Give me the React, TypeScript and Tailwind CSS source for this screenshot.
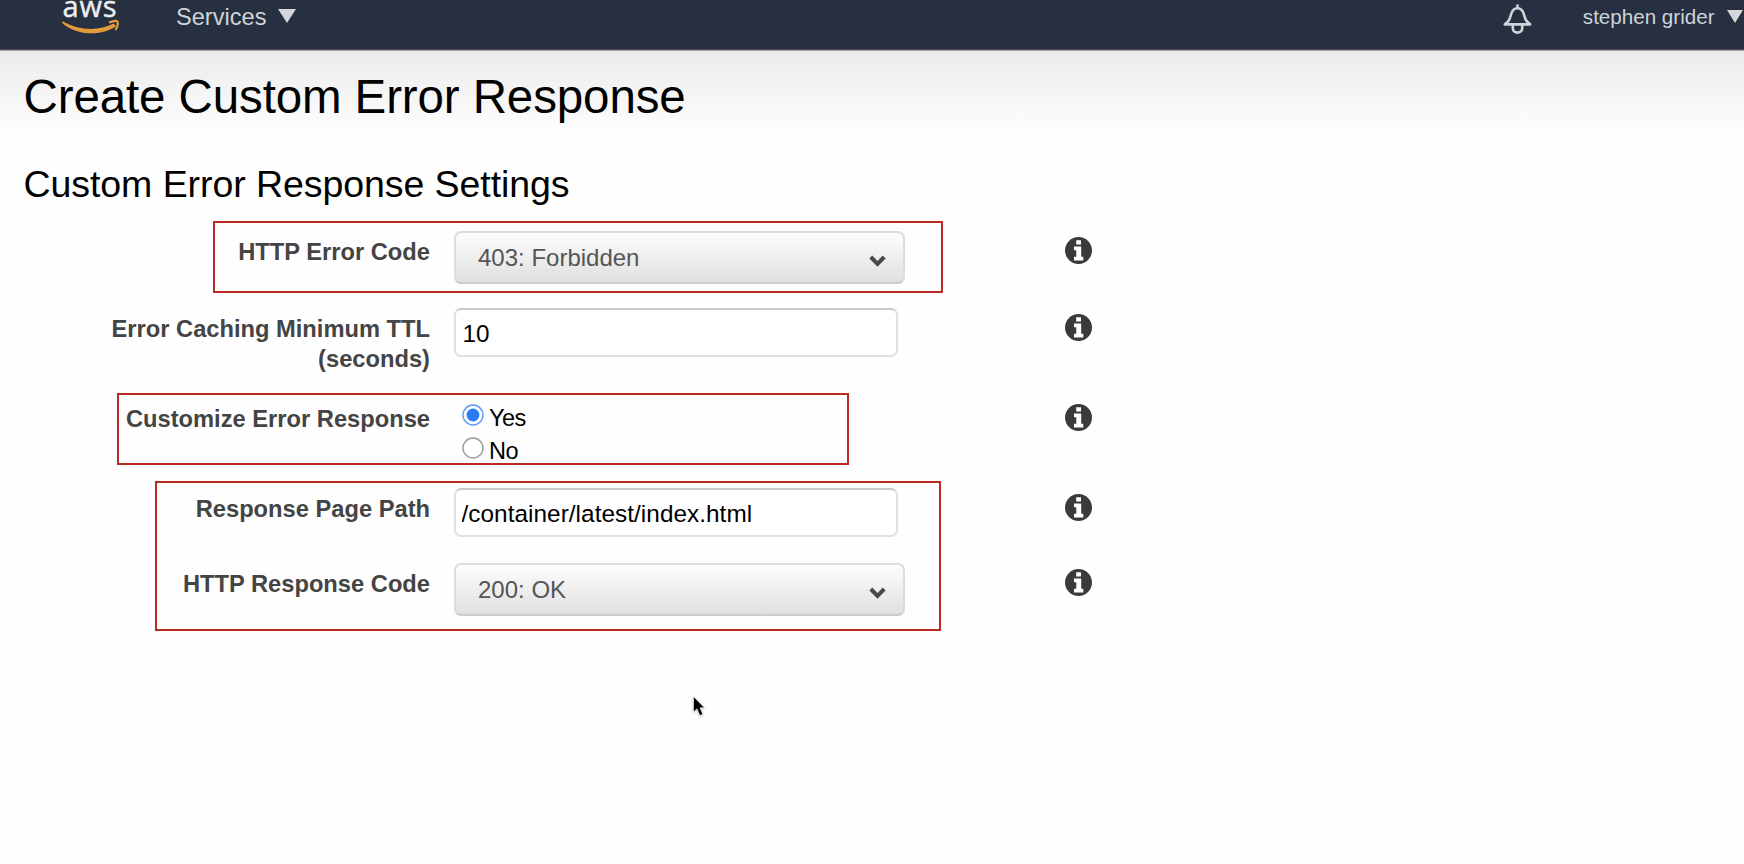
import type { ReactNode } from "react";

function InfoIcon() {
  return (
    <svg viewBox="0 0 27 27" className="mt-[6px] h-[27px] w-[27px]" aria-label="Info">
      <circle cx="13.5" cy="13.5" r="13.5" fill="#3a3a3a" />
      <path d="M11.2 3.2h4.8v4.4h-4.8zM9 9.6h7.2v10.2h2.1v3.600H9v-3.600h2.300v-6.600H9z" fill="#fff" />
    </svg>
  );
}

function Row({ label, height, children }: { label: ReactNode; height: string; children: ReactNode }) {
  return (
    <div className={`flex items-start ${height}`}>
      <div className="w-[430px] pt-[6px] text-right text-[23.7px] leading-[30px] font-bold text-[#444]">{label}</div>
      <div className="ml-6 w-[611px]">{children}</div>
      <InfoIcon />
    </div>
  );
}

function SelectBox({ value }: { value: string }) {
  return (
    <button className="flex h-[53px] w-[451px] items-center justify-between rounded-[7px] border-2 border-[#dcdcdc] border-b-[#cbcbcb] bg-linear-to-b from-[#fdfdfd] to-[#e0e0e0] pr-[17px] pl-[22px] text-[24px] text-[#555]">
      <span>{value}</span>
      <svg viewBox="0 0 17 12" className="mt-[6px] h-3 w-[17px]">
        <path d="M1.800 2L8.500 8.800L15.200 2" fill="none" stroke="#484848" strokeWidth="4" />
      </svg>
    </button>
  );
}

function TextBox({ value, inset }: { value: string; inset: string }) {
  return (
    <input
      readOnly
      value={value}
      className={`block h-[49px] w-[444px] rounded-[7px] border-2 border-[#e0e0e0] border-t-[#c8c8c8] bg-white pt-[2px] text-[24.3px] text-black outline-none ${inset}`}
    />
  );
}

function Radio({ label, checked }: { label: string; checked?: boolean }) {
  return (
    <div className="flex h-[33px] items-start">
      <svg viewBox="0 0 22 22" className="mr-[5.5px] ml-[7.5px] h-[22px] w-[22px]">
        <circle cx="11" cy="11" r="10" fill="#fff" stroke={checked ? "#5b97f5" : "#999"} strokeWidth="1.4" />
        {checked && <circle cx="11" cy="11" r="6.4" fill="#2a7bf6" />}
      </svg>
      <span className="text-[23.5px] leading-[28px] tracking-[-0.5px] text-black">{label}</span>
    </div>
  );
}

export default function App() {
  return (
    <div className="relative h-[864px] w-[1744px] overflow-hidden bg-[#fefefe] font-['Liberation_Sans',Arial,sans-serif]">
      <header className="flex h-[51px] items-start border-b border-[#a5a5aa] bg-[#263041] text-[#cfd3d8] shadow-[inset_0_-1px_0_#4a4a52]">
        <svg viewBox="0 0 60 36" className="ml-[61px] h-9 w-[60px]" aria-label="aws">
          <text x="1.5" y="17" fontSize="29" fontFamily="Open Sans, sans-serif" fontWeight="500" fill="#eceef0" stroke="#eceef0" strokeWidth="0.4" textLength="54">aws</text>
          <path d="M1.5 21.300C18 30.800 37 31.300 53 23.600L54.800 26.400C38 36.800 15 35.300 1.200 23Z" fill="#e39a3b" />
          <path d="M48 22.600C52 20.800 55.500 20.600 56.500 21.600C57.300 24 56 27.500 54.500 30" fill="none" stroke="#e39a3b" strokeWidth="2.200" />
        </svg>
        <div className="ml-[55px] flex items-start">
          <span className="text-[23.6px] leading-[34px]">Services</span>
          <svg viewBox="0 0 18 14" className="mt-[9px] ml-[12px] h-[14px] w-[18px]"><path d="M0 0H18L9 14Z" fill="#d4d7db" /></svg>
        </div>
        <div className="ml-auto flex items-start">
          <svg viewBox="0 0 30 30" className="mt-1 mr-[49.500px] h-[30px] w-[30px]" fill="none" stroke="#cfd3d8" strokeWidth="2.600" strokeLinejoin="round">
            <path d="M14.500 0.500V4M1.800 20.400H27.200C22.500 17 22.300 15 21 10.500C19.700 6 17.500 4.300 14.500 4.300S9.300 6 8 10.500C6.700 15 6.500 17 1.800 20.400ZM9.800 21V24.300C9.800 30 19.200 30 19.200 24.300V21" />
          </svg>
          <span className="text-[20.600px] leading-[34px]">stephen grider</span>
          <svg viewBox="0 0 16 13" className="mt-[10px] mr-[1.500px] ml-[12px] h-[13px] w-4"><path d="M0 0H16L8 13Z" fill="#d4d7db" /></svg>
        </div>
      </header>

      <main className="bg-[linear-gradient(#ebebeb,#fefefe_82px)] pt-4">
        <h1 className="pl-[23.500px] text-[47.5px] leading-[60px] tracking-[-0.110px] text-black">Create Custom Error Response</h1>
        <h2 className="mt-[35px] pl-[23.500px] text-[37.500px] leading-[44px] tracking-[-0.070px] text-black">Custom Error Response Settings</h2>
        <div className="mt-[25px]">
          <Row label="HTTP Error Code" height="h-[77px]">
            <SelectBox value="403: Forbidden" />
          </Row>
          <Row label={<>Error Caching Minimum TTL<br />(seconds)</>} height="h-[90px]">
            <TextBox value="10" inset="pl-[6.5px]" />
          </Row>
          <Row label="Customize Error Response" height="h-[90px]">
            <div className="pt-[6px]">
              <Radio label="Yes" checked />
              <Radio label="No" />
            </div>
          </Row>
          <Row label="Response Page Path" height="h-[75px]">
            <TextBox value="/container/latest/index.html" inset="pl-[5.5px] tracking-[0.06px]" />
          </Row>
          <Row label="HTTP Response Code" height="h-[77px]">
            <SelectBox value="200: OK" />
          </Row>
        </div>
      </main>

      <div className="pointer-events-none absolute top-[221px] left-[213px] h-[72px] w-[730px] border-2 border-[#b92b23]" />
      <div className="pointer-events-none absolute top-[393px] left-[117px] h-[72px] w-[732px] border-2 border-[#b92b23]" />
      <div className="pointer-events-none absolute top-[481px] left-[155px] h-[150px] w-[786px] border-2 border-[#b92b23]" />

      <svg viewBox="0 0 14 22" className="absolute top-[696px] left-[693px] h-[22px] w-[14px] overflow-visible drop-shadow-[0_1px_1px_rgba(0,0,0,0.25)]">
        <path d="M0.500 0.500V16L4 12.800L6.800 19.500L9.800 18.200L7 11.800H11.500Z" fill="#000" stroke="#fff" strokeWidth="0.600" />
      </svg>
    </div>
  );
}
